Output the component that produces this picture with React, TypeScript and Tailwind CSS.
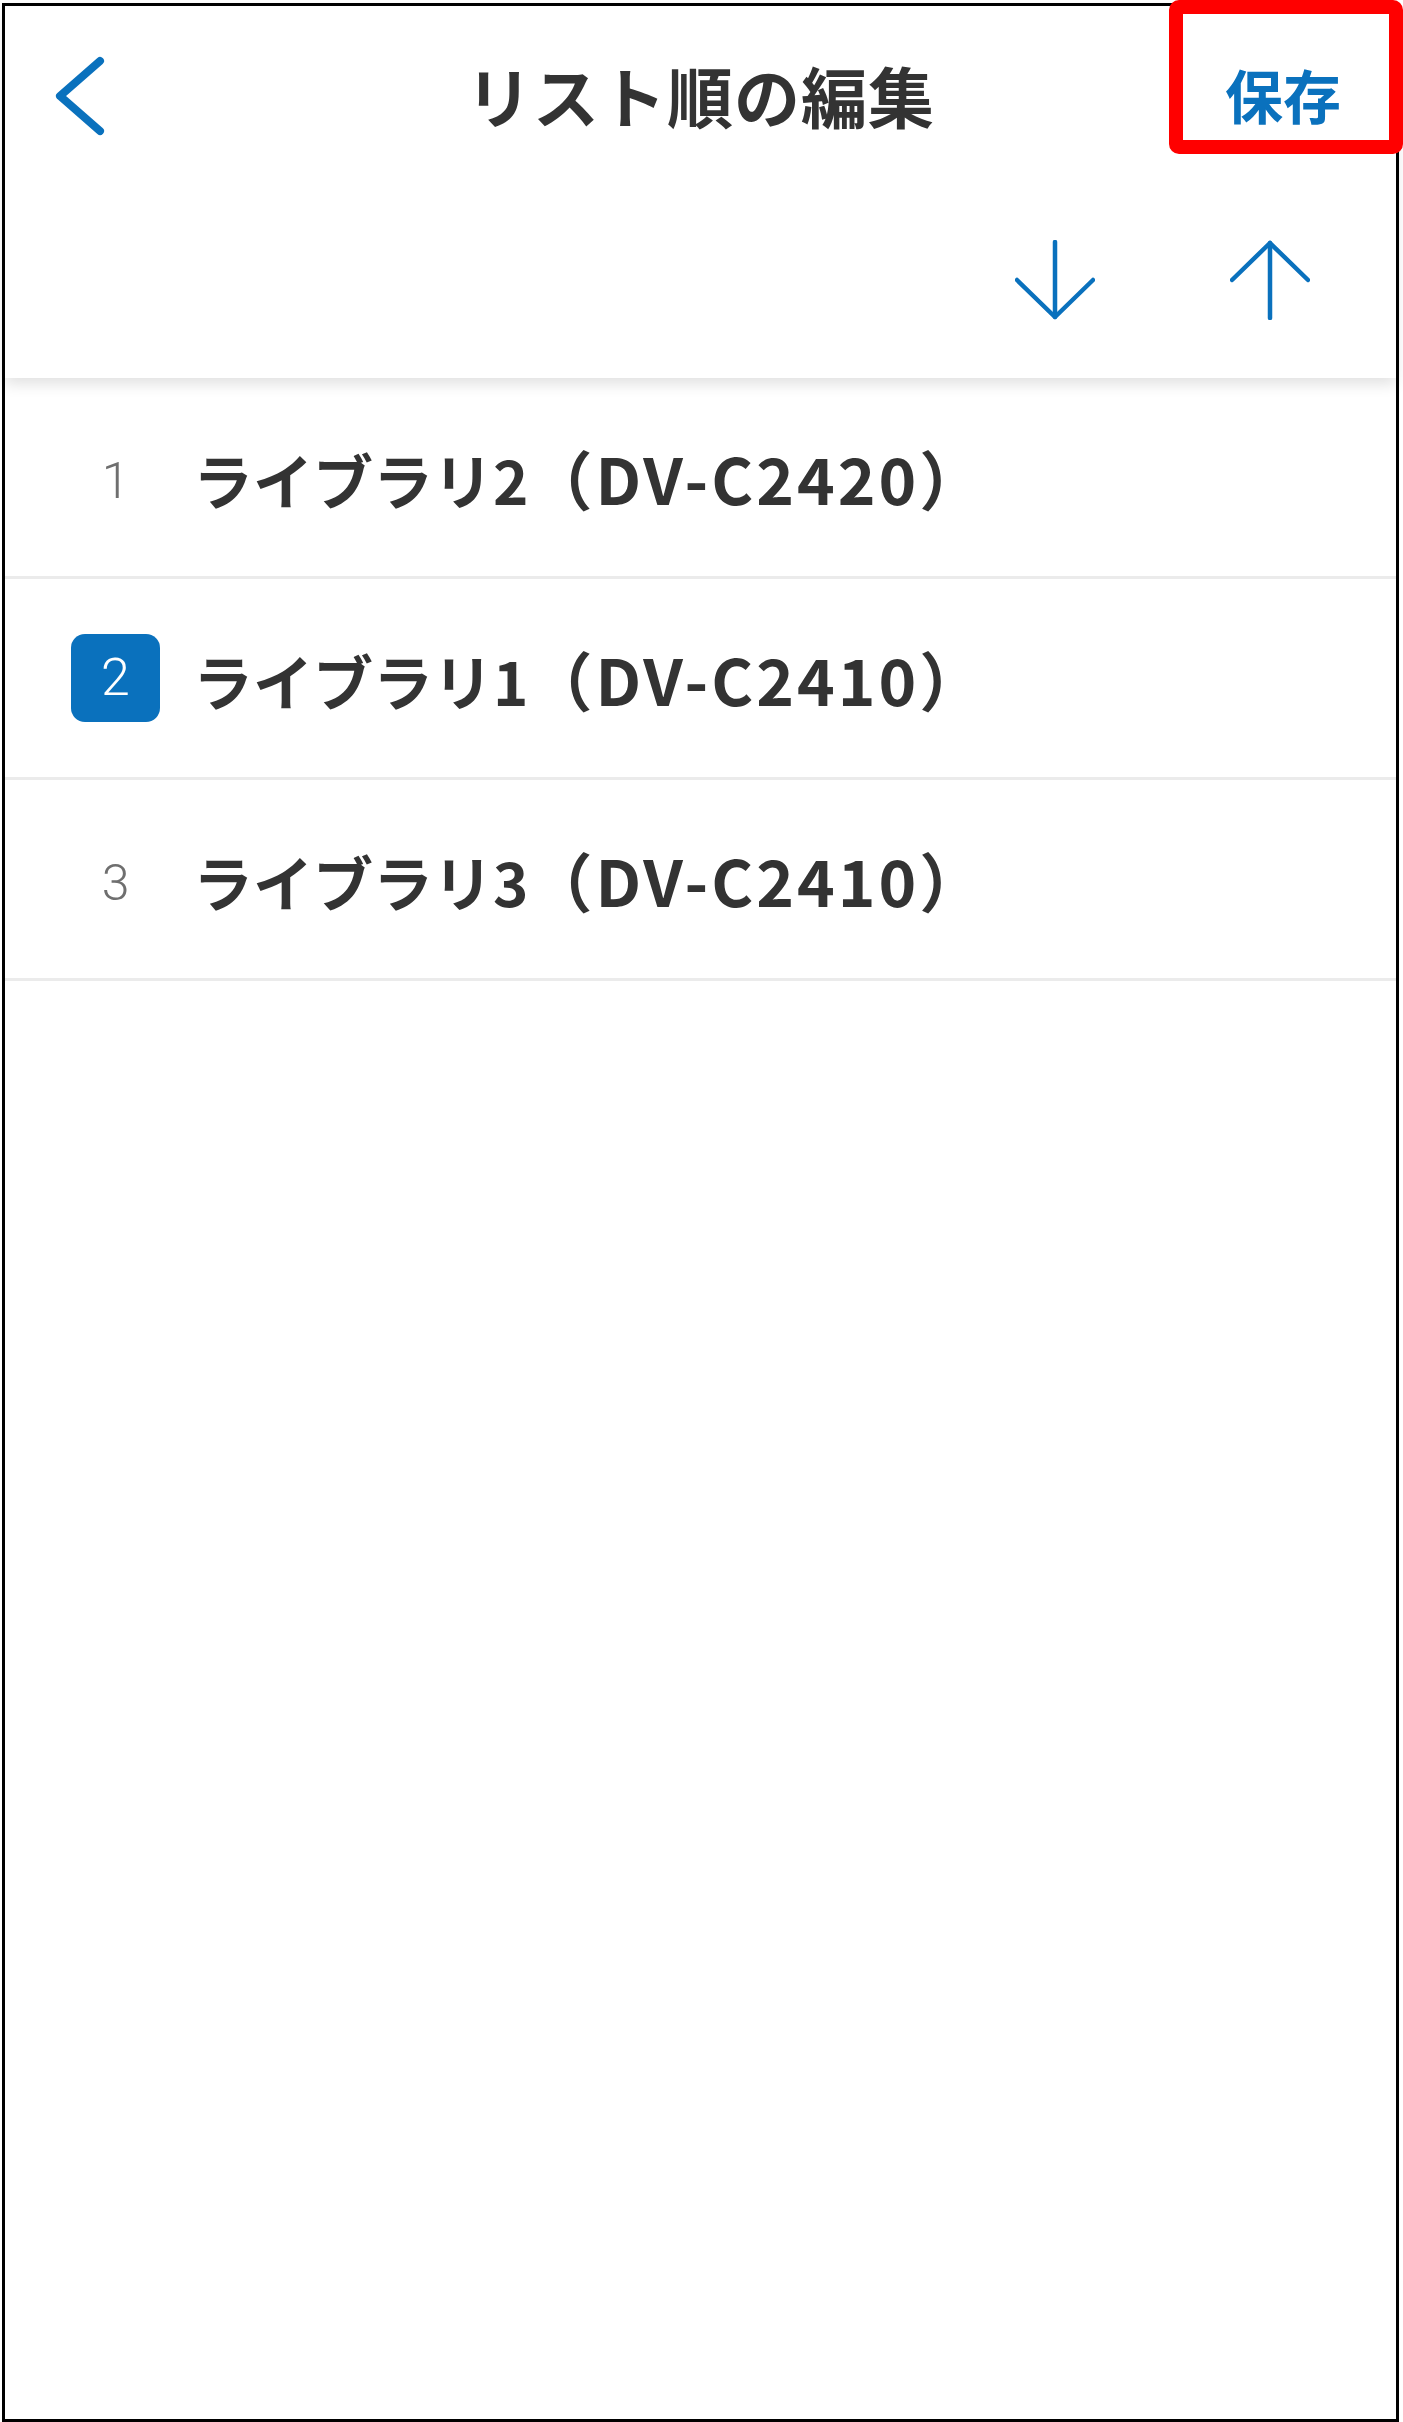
import React from "react";

const BLUE = "#0a71bd";

function Chevron() {
  return (
    <svg width="56" height="86" viewBox="0 0 56 86" fill="none">
      <path d="M48 10 L8 45 L48 80" stroke={BLUE} strokeWidth="8" strokeLinecap="round" strokeLinejoin="round" />
    </svg>
  );
}

function ArrowDown() {
  return (
    <svg width="80" height="80" viewBox="0 0 80 80" fill="none">
      <path d="M40 2 V77" stroke={BLUE} strokeWidth="4.5" strokeLinecap="round" />
      <path d="M2 40 L40 77 L78 40" stroke={BLUE} strokeWidth="4.5" strokeLinecap="round" strokeLinejoin="round" />
    </svg>
  );
}

function ArrowUp() {
  return (
    <svg width="80" height="80" viewBox="0 0 80 80" fill="none">
      <path d="M40 3 V78" stroke={BLUE} strokeWidth="4.5" strokeLinecap="round" />
      <path d="M2 40 L40 3 L78 40" stroke={BLUE} strokeWidth="4.5" strokeLinecap="round" strokeLinejoin="round" />
    </svg>
  );
}

const rows = [
  { n: 1, name: "ライブラリ2", model: "DV-C2420", active: false },
  { n: 2, name: "ライブラリ1", model: "DV-C2410", active: true },
  { n: 3, name: "ライブラリ3", model: "DV-C2410", active: false },
];

export default function App() {
  return (
    <div className="relative w-[1403px] h-[2422px] bg-white pt-[3px] pl-[2px] font-['Noto_Sans_CJK_JP',sans-serif]">
      <div className="w-[1397px] h-[2419px] border-[3px] border-black flex flex-col bg-white">
        <header className="relative z-10 bg-white shadow-[0_6px_14px_rgba(0,0,0,0.12)]">
          <div className="h-[176px] grid grid-cols-[1fr_auto_1fr] items-center">
            <div className="pl-[47px] flex items-center">
              <Chevron />
            </div>
            <h1 className="text-[66px] leading-none font-bold text-[#333333] tracking-[1px]">リスト順の編集</h1>
            <div className="flex justify-end pr-[55px]">
              <span className="text-[58px] leading-none font-bold text-[#0a71bd]">保存</span>
            </div>
          </div>
          <div className="h-[196px] flex items-center justify-end gap-[135px] pr-[86px]">
            <ArrowDown />
            <ArrowUp />
          </div>
        </header>
        <ul>
          {rows.map((r) => (
            <li key={r.n} className="h-[201px] border-b-[3px] border-[#ebebeb] flex items-center pl-[66px]">
              <div className="w-[89px] flex justify-center">
                {r.active ? (
                  <div className="w-[89px] h-[88px] rounded-[14px] bg-[#0a71bd] flex items-center justify-center text-white text-[52px] font-light font-['Roboto',sans-serif] leading-none">
                    {r.n}
                  </div>
                ) : (
                  <span className="text-[50px] font-light font-['Roboto',sans-serif] text-[#6f6f6f] leading-none pt-[8px]">{r.n}</span>
                )}
              </div>
              <span className="ml-[33px] text-[60px] leading-none font-bold text-[#333333]">
                {r.name}
                <span className="text-[64px] tracking-[3px]">（{r.model}）</span>
              </span>
            </li>
          ))}
        </ul>
      </div>
      <div className="absolute z-20 left-[1169px] top-0 w-[234px] h-[154px] border-[14px] border-[#ff0000] rounded-[10px]" />
    </div>
  );
}
